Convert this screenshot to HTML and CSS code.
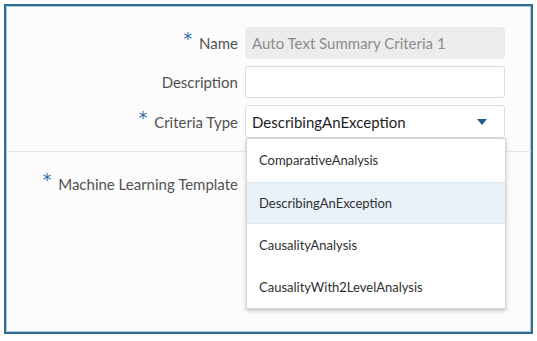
FILE: index.html
```html
<!DOCTYPE html>
<html lang="en">
<head>
  <meta charset="UTF-8">
  <meta name="viewport" content="width=device-width, initial-scale=1">
  <title>Text Summary Criteria</title>
  <link rel="stylesheet" href="styles.css">
</head>
<body>

  <div class="panel">

    <!-- Basic fields -->
    <div class="section top">
      <div class="row">
        <label class="label"><span class="req">*</span>Name</label>
        <div class="field readonly">Auto Text Summary Criteria 1</div>
      </div>
      <div class="row">
        <label class="label">Description</label>
        <div class="field"></div>
      </div>
      <div class="row">
        <label class="label"><span class="req">*</span>Criteria Type</label>
        <div class="field select">
          <span>DescribingAnException</span>
          <svg class="caret" width="10" height="6" viewBox="0 0 10 6"><path d="M0 0h10L5 6z"/></svg>

          <!-- open dropdown -->
          <ul class="menu">
            <li>ComparativeAnalysis</li>
            <li class="active">DescribingAnException</li>
            <li>CausalityAnalysis</li>
            <li>CausalityWith2LevelAnalysis</li>
          </ul>
        </div>
      </div>
    </div>

    <!-- Template -->
    <div class="section">
      <div class="row">
        <label class="label"><span class="req">*</span>Machine Learning Template</label>
        <div class="field blank"></div>
      </div>
    </div>

  </div>

</body>
</html>
```

FILE: styles.css
```css
body {
  margin: 0;
  background: #fff;
  font-family: Lato, "Noto Sans", Arial, sans-serif;
  font-size: 15px;
}

.panel {
  margin: 4px;
  height: 330px;
  box-sizing: border-box;
  border: 2px solid #2f6e91;
  box-shadow: inset 0 0 0 1px #a9cbdc;
  background: #fcfcfc;
}

.section {
  padding: 16px 0;
}

.section.top {
  padding: 21px 0 13px;
  border-bottom: 1px solid #e6e6e6;
}

.row {
  display: grid;
  grid-template-columns: 232px 260px;
  column-gap: 7px;
  align-items: center;
  margin-bottom: 7px;
}

.row:last-child {
  margin-bottom: 0;
}

.label {
  text-align: right;
  color: #525252;
}

.req {
  font-family: "DejaVu Sans", sans-serif;
  color: #2e6ea6;
  font-size: 17px;
  margin-right: 7px;
  position: relative;
  top: -4px;
}

.field {
  height: 32px;
  box-sizing: border-box;
  border: 1px solid #dcdcdc;
  border-radius: 3px;
  background: #fff;
  padding: 0 6px;
  display: flex;
  align-items: center;
}

.field.readonly {
  border-color: #ececec;
  background: #ececec;
  color: #8c8c8c;
}

.field.blank {
  border-color: transparent;
  background: transparent;
}

.select {
  position: relative;
  justify-content: space-between;
  color: #1e1e1e;
  height: 33px;
}

.caret {
  fill: #1c5f8f;
  margin-right: 11px;
}

.menu {
  position: absolute;
  top: 32px;
  left: 0;
  width: 258px;
  margin: 0;
  padding: 0;
  list-style: none;
  background: #fff;
  border: 1px solid #d6d6d6;
  box-shadow: 0 2px 4px rgba(0, 0, 0, 0.22);
  z-index: 2;
}

.menu li {
  height: 42px;
  line-height: 42px;
  padding: 0 12px;
  font-size: 13px;
  color: #2f2f2f;
}

.menu li:first-child {
  height: 43px;
}

.menu li.active {
  background: #e9f2f9;
  box-shadow: inset 0 1px 0 #dfe8ef, inset 0 -1px 0 #dfe8ef;
}
```
